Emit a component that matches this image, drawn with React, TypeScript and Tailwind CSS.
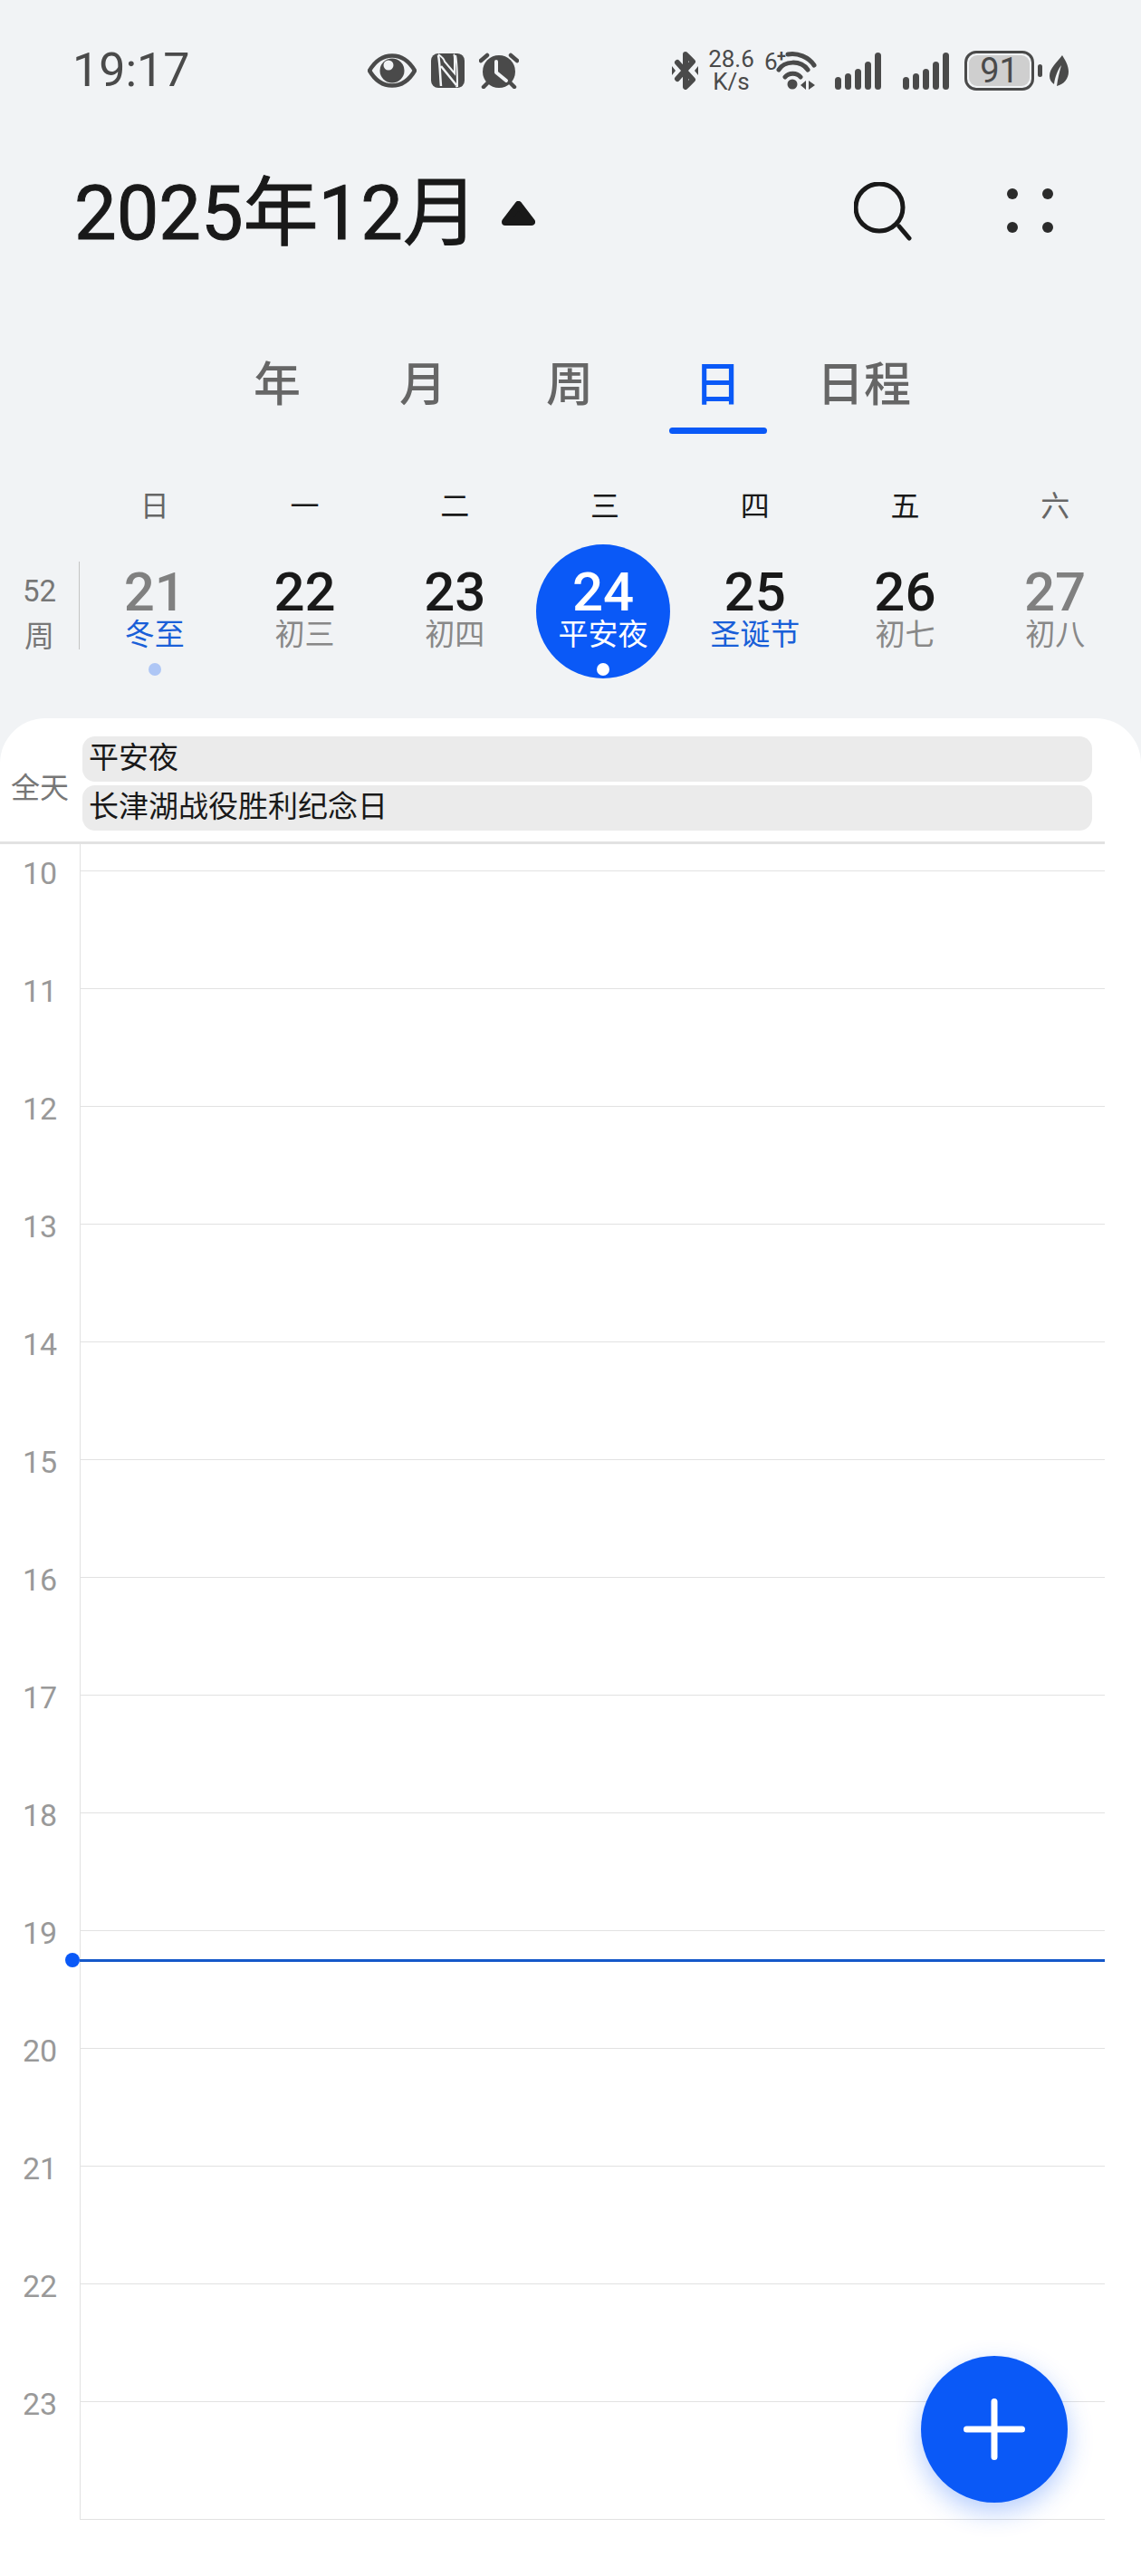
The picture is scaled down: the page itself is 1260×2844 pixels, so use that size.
const fontStack = "font-['Roboto','Noto_Sans_CJK_SC',sans-serif]"

const tabs = [
  { label: '年', width: 'w-[160px]' },
  { label: '月', width: 'w-[162px]' },
  { label: '周', width: 'w-[162px]' },
  { label: '日', width: 'w-[165px]', active: true },
  { label: '日程', width: 'w-[158px]' },
]

const days = [
  { week: '日', date: '21', sub: '冬至', weekend: true, holiday: true, dot: true },
  { week: '一', date: '22', sub: '初三' },
  { week: '二', date: '23', sub: '初四' },
  { week: '三', date: '24', sub: '平安夜', active: true, dot: true },
  { week: '四', date: '25', sub: '圣诞节', holiday: true },
  { week: '五', date: '26', sub: '初七' },
  { week: '六', date: '27', sub: '初八', weekend: true },
]

const hours = [10, 11, 12, 13, 14, 15, 16, 17, 18, 19, 20, 21, 22, 23]

function Signal() {
  return (
    <svg width="51" height="42" viewBox="0 0 51 42" fill="#4a4a4a">
      <rect x="0" y="28" width="7" height="14" rx="3.5" />
      <rect x="11" y="24" width="7" height="18" rx="3.5" />
      <rect x="22" y="19" width="7" height="23" rx="3.5" />
      <rect x="33" y="11" width="7" height="31" rx="3.5" />
      <rect x="44" y="1" width="7" height="41" rx="3.5" />
    </svg>
  )
}

function StatusBar() {
  return (
    <div className="flex items-center h-[44px] mt-[56px] pl-[80px] text-[#4a4a4a]">
      <span className="text-[52px] leading-[44px] w-[126px]">19:17</span>
      <svg className="ml-[200px]" width="54" height="38" viewBox="0 0 54 38">
        <path d="M2 19C9 7 18 2.5 27 2.5S45 7 52 19C45 31 36 35.5 27 35.5S9 31 2 19Z" fill="none" stroke="#4a4a4a" strokeWidth="4.5" strokeLinejoin="round" />
        <circle cx="27" cy="19" r="13.5" fill="#4a4a4a" />
        <circle cx="23" cy="13" r="5.5" fill="#f1f3f5" />
      </svg>
      <svg className="ml-[16px]" width="37" height="38" viewBox="0 0 37 38">
        <rect width="37" height="38" rx="8" fill="#4a4a4a" />
        <path d="M8 1C11 3 14 5 15 9L26 22V7C26 4 26 2 25 1" fill="none" stroke="#f1f3f5" strokeWidth="2" />
        <path d="M8 2C10 12 10 26 11 36M11 14L28 35C27 34 29 37 29 37" fill="none" stroke="#f1f3f5" strokeWidth="2.5" />
        <path d="M27 2C29 12 29 26 29 37" fill="none" stroke="#f1f3f5" strokeWidth="2" />
      </svg>
      <svg className="ml-[16px]" width="44" height="40" viewBox="0 0 44 40">
        <circle cx="22" cy="21" r="18" fill="#4a4a4a" />
        <path d="M19 10V22L30 31" fill="none" stroke="#f1f3f5" strokeWidth="4" strokeLinecap="round" strokeLinejoin="round" />
        <path d="M2 9L9 3M35 3L42 9M9 34L5 38M35 34L39 38" stroke="#4a4a4a" strokeWidth="4.5" strokeLinecap="round" />
      </svg>
      <svg className="ml-[169px]" width="29" height="42" viewBox="0 0 29 42">
        <path d="M6 12L23 31L15 39V3L23 11L6 30" fill="none" stroke="#4a4a4a" strokeWidth="6" strokeLinecap="round" strokeLinejoin="round" />
        <path d="M0 16L4 21L0 26ZM29 16L25 21L29 26Z" fill="#4a4a4a" />
      </svg>
      <div className="ml-[11px] flex flex-col items-center text-[26px] leading-[25px] w-[51px]">
        <span>28.6</span>
        <span>K/s</span>
      </div>
      <span className="ml-[11px] self-start text-[26px] leading-[24px] w-[14px]">6</span>
      <span className="self-start text-[18px] leading-[12px] font-bold w-[5px]">+</span>
      <svg className="-ml-[7px]" width="46" height="42" viewBox="0 0 46 42">
        <path d="M14 3C25 1 37 6 43 15M4 20C10 10 28 9 36 20M11 28C15 23 24 23 28 28" fill="none" stroke="#4a4a4a" strokeWidth="5" strokeLinecap="round" />
        <circle cx="19" cy="36" r="5.5" fill="#4a4a4a" />
        <path d="M28 37L34 32V42ZM37 32L44 37L37 42Z" fill="#4a4a4a" />
      </svg>
      <div className="ml-[20px]"><Signal /></div>
      <div className="ml-[24px]"><Signal /></div>
      <div className="ml-[17px] w-[77px] h-[44px] rounded-[13px] border-[3px] border-[#4a4a4a] p-[2px]">
        <div className="h-full rounded-[9px] bg-[#cfcfcf] flex items-center justify-center text-[38px] leading-none">91</div>
      </div>
      <div className="ml-[4px] w-[5px] h-[14px] rounded-full bg-[#4a4a4a]" />
      <svg className="ml-[8px]" width="21" height="34" viewBox="0 0 21 34" fill="#4a4a4a">
        <path d="M14 0C8 8 0 14 0 23C0 27 2 30 5 32C6 24 9 16 13 11C11 18 9 26 8 34C16 32 21 26 21 18C21 11 17 5 14 0Z" />
      </svg>
    </div>
  )
}

function Header() {
  return (
    <div className="flex items-center h-[100px] mt-[85px] pl-[82px]">
      <h1 className="mt-[2px] text-[83px] leading-[100px] text-[#191919] w-[432px] whitespace-nowrap [-webkit-text-stroke:1px_#191919]">2025年12月</h1>
      <svg className="ml-[40px]" width="37" height="27" viewBox="0 0 37 27">
        <path d="M18.5 4L33 23H4Z" fill="#191919" stroke="#191919" strokeWidth="8" strokeLinejoin="round" />
      </svg>
      <svg className="ml-[352px] -mt-[4px]" width="64" height="65" viewBox="0 0 64 65" fill="none" stroke="#191919">
        <ellipse cx="28" cy="28" rx="26" ry="26" strokeWidth="5" />
        <path d="M50 49L61 62" strokeWidth="5" strokeLinecap="round" />
      </svg>
      <svg className="ml-[105px] -mt-[4px]" width="52" height="50" viewBox="0 0 52 50" fill="#2b2b2b">
        <circle cx="6" cy="6" r="6" />
        <circle cx="45" cy="6" r="6" />
        <circle cx="6" cy="43" r="6" />
        <circle cx="45" cy="43" r="6" />
      </svg>
    </div>
  )
}

function Tabs() {
  return (
    <div className="flex mt-[111px] pl-[226px]">
      {tabs.map((tab) => (
        <div key={tab.label} className={`${tab.width} flex flex-col items-center`}>
          <span className={`text-[52px] leading-[60px] font-medium ${tab.active ? 'text-[#0a59f7]' : 'text-[#666666]'}`}>
            {tab.label}
          </span>
          {tab.active && <div className="mt-[16px] w-[108px] h-[7px] rounded-full bg-[#0a59f7]" />}
        </div>
      ))}
    </div>
  )
}

function WeekStrip() {
  return (
    <>
      <div className="grid grid-cols-7 pl-[88px] pr-[12px] mt-[60px]">
        {days.map((d) => (
          <div key={d.week} className={`text-center text-[32px] leading-[40px] ${d.weekend ? 'text-[#666666]' : 'text-[#191919]'}`}>
            {d.week}
          </div>
        ))}
      </div>
      <div className="flex mt-[22px] h-[148px]">
        <div className="w-[88px] flex items-center shrink-0">
          <div className="w-[88px] h-[97px] -mt-[13px] pt-[8px] border-r border-[#c4c4c4] flex flex-col items-center text-[#777777] text-[33px] leading-[50px]">
            <span>52</span>
            <span>周</span>
          </div>
        </div>
        <div className="grid grid-cols-7 w-[1160px]">
          {days.map((d) => (
            <div key={d.date} className="flex justify-center">
              <div className={`w-[148px] h-[148px] rounded-full flex flex-col items-center pt-[25px] ${d.active ? 'bg-[#0a59f7] -ml-[4px]' : ''}`}>
                <span className={`text-[60px] leading-[55px] font-medium ${d.active ? 'text-white' : d.weekend ? 'text-[#808080]' : 'text-[#191919]'}`}>
                  {d.date}
                </span>
                <span className={`text-[33px] leading-[40px] ${d.active ? 'text-white' : d.holiday ? 'text-[#1a5fd8]' : 'text-[#888888]'}`}>
                  {d.sub}
                </span>
                {d.dot && <div className={`mt-[11px] w-[14px] h-[14px] rounded-full ${d.active ? 'bg-white' : 'bg-[#aec6f5]'}`} />}
              </div>
            </div>
          ))}
        </div>
      </div>
    </>
  )
}

function AllDay() {
  return (
    <div className="flex pt-[20px] pb-[12px]">
      <div className="w-[88px] pt-[10px] flex items-center justify-center text-[32px] text-[#777777]">全天</div>
      <div className="ml-[3px] w-[1115px] flex flex-col gap-[4px]">
        <div className="h-[50px] rounded-[14px] bg-[#ebebeb] pl-[7px] text-[33px] leading-[48px] text-[#191919]">平安夜</div>
        <div className="h-[50px] rounded-[14px] bg-[#ebebeb] pl-[7px] text-[33px] leading-[48px] text-[#191919]">长津湖战役胜利纪念日</div>
      </div>
    </div>
  )
}

function HourGrid() {
  return (
    <div className="relative">
      <div className="h-[29px] w-[1220px] pl-[88px]">
        <div className="h-full border-l border-[#e2e2e2]" />
      </div>
      {hours.map((h) => (
        <div key={h} className="flex w-[1220px] h-[130px]">
          <div className="w-[88px] h-[40px] -mt-[17px] text-center text-[34px] leading-[40px] text-[#999999]">{h}</div>
          <div className="flex-1 border-l border-t border-[#e2e2e2]" />
        </div>
      ))}
      <div className="ml-[88px] w-[1132px] border-t border-[#e2e2e2]" />
      <div className="absolute left-[88px] top-[1231px] w-[1132px] h-[3px] bg-[#1558c9]" />
      <div className="absolute left-[72px] top-[1224px] w-[16px] h-[16px] rounded-full bg-[#0a59f7]" />
    </div>
  )
}

export default function App() {
  return (
    <div className={`relative w-[1260px] h-[2844px] overflow-hidden bg-[#f1f3f5] flex flex-col ${fontStack}`}>
      <StatusBar />
      <Header />
      <Tabs />
      <WeekStrip />
      <div className="mt-[44px] flex-1 bg-white rounded-t-[50px]">
        <AllDay />
        <div className="w-[1220px] h-[3px] bg-[#e2e2e2]" />
        <HourGrid />
      </div>
      <button className="absolute left-[1017px] top-[2601px] w-[162px] h-[162px] rounded-full bg-[#0a59f7] flex items-center justify-center shadow-[0_10px_28px_rgba(10,89,247,0.3)]">
        <svg width="68" height="68" viewBox="0 0 68 68" stroke="white" strokeWidth="7" strokeLinecap="round">
          <path d="M34 3.5V64.5M3.5 34H64.5" />
        </svg>
      </button>
    </div>
  )
}
